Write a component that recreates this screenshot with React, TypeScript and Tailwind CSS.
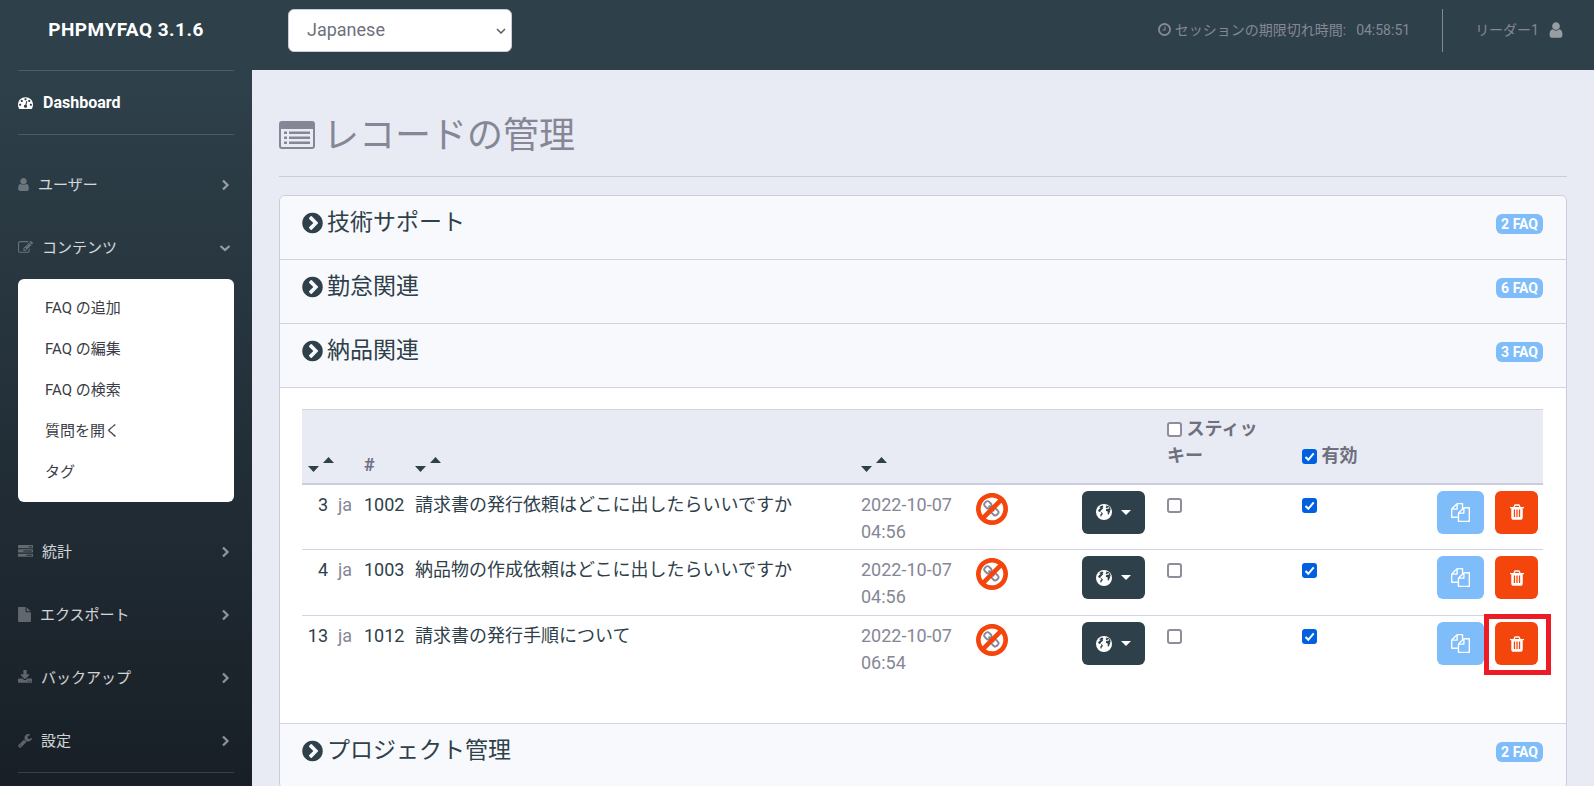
import type { ReactNode } from "react";

const icons = {
  user: {
    box: "256 0 1280 1792",
    d: "M1536 1399q0 109-62.5 187t-150.5 78h-854q-88 0-150.5-78t-62.5-187q0-85 8.5-160.5t31.5-152 58.5-131 94-89 134.5-34.5q131 128 313 128t313-128q76 0 134.5 34.5t94 89 58.5 131 31.5 152 8.5 160.5zm-256-887q0 159-112.5 271.5t-271.5 112.5-271.5-112.5-112.5-271.5 112.5-271.5 271.5-112.5 271.5 112.5 112.5 271.5z",
  },
  dashboard: {
    box: "0 0 1792 1792",
    d: "M384 1152q0-53-37.5-90.5t-90.5-37.5-90.5 37.5-37.5 90.5 37.5 90.5 90.5 37.5 90.5-37.5 37.5-90.5zm192-448q0-53-37.5-90.5t-90.5-37.5-90.5 37.5-37.5 90.5 37.5 90.5 90.5 37.5 90.5-37.5 37.5-90.5zm428 481l101-382q6-26-7.5-48.5t-38.5-29.5-48 6.5-30 39.5l-101 382q-60 5-107 43.5t-63 98.5q-20 77 20 146t117 89 146-20 89-117q16-60-6-117t-72-91zm660-33q0-53-37.5-90.5t-90.5-37.5-90.5 37.5-37.5 90.5 37.5 90.5 90.5 37.5 90.5-37.5 37.5-90.5zm-640-640q0-53-37.5-90.5t-90.5-37.5-90.5 37.5-37.5 90.5 37.5 90.5 90.5 37.5 90.5-37.5 37.5-90.5zm448 192q0-53-37.5-90.5t-90.5-37.5-90.5 37.5-37.5 90.5 37.5 90.5 90.5 37.5 90.5-37.5 37.5-90.5zm320 448q0 261-141 483-19 29-54 29h-1402q-35 0-54-29-141-221-141-483 0-182 71-348t191-286 286-191 348-71 348 71 286 191 191 286 71 348z",
  },
  edit: {
    box: "0 0 1792 1792",
    d: "M888 1184l116-116-152-152-116 116v56h96v96h56zm440-720q-16-16-33 1l-350 350q-17 17-1 33t33-1l350-350q17-17 1-33zm80 594v190q0 119-84.5 203.5t-203.5 84.5h-832q-119 0-203.5-84.5t-84.5-203.5v-832q0-119 84.5-203.5t203.5-84.5h832q63 0 117 25 15 7 18 23 3 17-9 29l-49 49q-14 14-32 8-23-6-45-6h-832q-66 0-113 47t-47 113v832q0 66 47 113t113 47h832q66 0 113-47t47-113v-126q0-13 9-22l64-64q15-15 35-7t20 29zm-96-738l288 288-672 672h-288v-288zm444 132l-92 92-288-288 92-92q28-28 68-28t68 28l152 152q28 28 28 68t-28 68z",
  },
  tasks: {
    box: "0 0 1792 1792",
    d: "M1024 1408h640v-128h-640v128zm-384-512h1024v-128h-1024v128zm640-512h384v-128h-384v128zm512 832v256q0 26-19 45t-45 19h-1664q-26 0-45-19t-19-45v-256q0-26 19-45t45-19h1664q26 0 45 19t19 45zm0-512v256q0 26-19 45t-45 19h-1664q-26 0-45-19t-19-45v-256q0-26 19-45t45-19h1664q26 0 45 19t19 45zm0-512v256q0 26-19 45t-45 19h-1664q-26 0-45-19t-19-45v-256q0-26 19-45t45-19h1664q26 0 45 19t19 45z",
  },
  file: {
    box: "128 0 1536 1792",
    d: "M1152 512v-472q22 14 36 28l408 408q14 14 28 36h-472zm-128 32q0 40 28 68t68 28h544v1056q0 40-28 68t-68 28h-1344q-40 0-68-28t-28-68v-1600q0-40 28-68t68-28h800v544z",
  },
  download: {
    box: "64 0 1664 1792",
    d: "M1344 1344q0-26-19-45t-45-19-45 19-19 45 19 45 45 19 45-19 19-45zm256 0q0-26-19-45t-45-19-45 19-19 45 19 45 45 19 45-19 19-45zm128-224v320q0 40-28 68t-68 28h-1472q-40 0-68-28t-28-68v-320q0-40 28-68t68-28h465l135 136q58 56 136 56t136-56l136-136h464q40 0 68 28t28 68zm-325-569q17 41-14 70l-448 448q-18 19-45 19t-45-19l-448-448q-31-29-14-70 17-39 59-39h256v-448q0-26 19-45t45-19h256q26 0 45 19t19 45v448h256q42 0 59 39z",
  },
  wrench: {
    box: "64 0 1664 1792",
    d: "M448 1472q0-26-19-45t-45-19-45 19-19 45 19 45 45 19 45-19 19-45zm644-420l-682 682q-37 37-90 37-52 0-91-37l-106-108q-38-36-38-90 0-53 38-91l681-681q39 98 114.5 173.5t173.5 114.5zm634-435q0 39-23 106-47 134-164.5 217.5t-258.5 83.5q-185 0-316.5-131.5t-131.5-316.5 131.5-316.5 316.5-131.5q58 0 121.5 16.5t107.5 46.5q16 11 16 28t-16 28l-293 169v224l193 107q5-3 79-48.5t135.5-81 70.5-35.5q15 0 23.5 10t8.5 25z",
  },
  clock: {
    box: "128 0 1536 1792",
    d: "M1024 544v448q0 14-9 23t-23 9h-320q-14 0-23-9t-9-23v-64q0-14 9-23t23-9h224v-352q0-14 9-23t23-9h64q14 0 23 9t9 23zm416 352q0-148-73-273t-198-198-273-73-273 73-198 198-73 273 73 273 198 198 273 73 273-73 198-198 73-273zm224 0q0 209-103 385.5t-279.5 279.5-385.5 103-385.5-103-279.5-279.5-103-385.5 103-385.5 279.5-279.5 385.5-103 385.5 103 279.5 279.5 103 385.5z",
  },
  chevronCircle: {
    box: "128 0 1536 1792",
    d: "M845 1395l454-454q19-19 19-45t-19-45l-454-454q-19-19-45-19t-45 19l-102 102q-19 19-19 45t19 45l307 307-307 307q-19 19-19 45t19 45l102 102q19 19 45 19t45-19zm819-499q0 209-103 385.5t-279.5 279.5-385.5 103-385.5-103-279.5-279.5-103-385.5 103-385.5 279.5-279.5 385.5-103 385.5 103 279.5 279.5 103 385.5z",
  },
  link: {
    box: "0 0 1792 1792",
    d: "M1456 1216q0-40-28-68l-208-208q-28-28-68-28-42 0-72 32 3 3 19 18.5t21.5 21.5 15 19 13 25.5 3.5 27.5q0 40-28 68t-68 28q-15 0-27.5-3.5t-25.5-13-19-15-21.5-21.5-18.5-19q-33 31-33 73 0 40 28 68l206 207q27 27 68 27 40 0 68-26l147-146q28-28 28-67zm-703-705q0-40-28-68l-206-207q-28-28-68-28-39 0-68 27l-147 146q-28 28-28 67 0 40 28 68l208 208q27 27 68 27 42 0 72-31-3-3-19-18.5t-21.5-21.5-15-19-13-25.5-3.5-27.5q0-40 28-68t68-28q15 0 27.5 3.5t25.5 13 19 15 21.5 21.5 18.5 19q33-31 33-73zm895 705q0 120-85 203l-147 146q-83 83-203 83-121 0-204-85l-206-207q-83-83-83-203 0-123 88-209l-88-88q-86 88-208 88-120 0-204-84l-208-208q-84-84-84-204t85-203l147-146q83-83 203-83 121 0 204 85l206 207q83 83 83 203 0 123-88 209l88 88q86-88 208-88 120 0 204 84l208 208q84 84 84 204z",
  },
  ban: {
    box: "128 128 1536 1536",
    d: "M1440 893q0-161-87-295l-754 753q137 89 297 89 111 0 211.5-43.5t173.5-116.5 116-174.5 43-212.5zm-999 299l755-754q-135-91-300-91-148 0-273 73t-198 199-73 274q0 162 89 299zm1223-299q0 157-61 300t-163.5 246-245 164-298.5 61-298.5-61-245-164-163.5-246-61-300 61-299.5 163.5-245.5 245-164 298.5-61 298.5 61 245 164 163.5 245.5 61 299.5z",
  },
  copy: {
    box: "0 0 1792 1792",
    d: "M1696 384q40 0 68 28t28 68v1216q0 40-28 68t-68 28h-960q-40 0-68-28t-28-68v-288h-544q-40 0-68-28t-28-68v-672q0-40 20-88t48-76l408-408q28-28 76-48t88-20h416q40 0 68 28t28 68v328q68-40 128-40h416zm-544 213l-299 299h299v-299zm-640-384l-299 299h299v-299zm196 647l316-316v-416h-384v416q0 40-28 68t-68 28h-416v640h512v-256q0-40 20-88t48-76zm956 804v-1152h-384v416q0 40-28 68t-68 28h-416v640h896z",
  },
  trash: {
    box: "192 0 1408 1792",
    d: "M704 1376v-704q0-14-9-23t-23-9h-64q-14 0-23 9t-9 23v704q0 14 9 23t23 9h64q14 0 23-9t9-23zm256 0v-704q0-14-9-23t-23-9h-64q-14 0-23 9t-9 23v704q0 14 9 23t23 9h64q14 0 23-9t9-23zm256 0v-704q0-14-9-23t-23-9h-64q-14 0-23 9t-9 23v704q0 14 9 23t23 9h64q14 0 23-9t9-23zm-544-992h448l-48-117q-7-9-17-11h-317q-10 2-17 11zm928 32v64q0 14-9 23t-23 9h-96v948q0 83-47 143.5t-113 60.5h-832q-66 0-113-58.5t-47-141.5v-952h-96q-14 0-23-9t-9-23v-64q0-14 9-23t23-9h309l70-167q15-37 54-63t79-26h320q40 0 79 26t54 63l70 167h309q14 0 23 9t9 23z",
  },
};

type IconName = keyof typeof icons;

function Icon({ name, className }: { name: IconName; className: string }) {
  return (
    <svg viewBox={icons[name].box} fill="currentColor" aria-hidden="true" className={`shrink-0 ${className}`}>
      <path d={icons[name].d} />
    </svg>
  );
}

function ListIcon() {
  return (
    <svg viewBox="0 0 36 28" fill="currentColor" aria-hidden="true" className="h-7 w-9 shrink-0">
      <path
        fillRule="evenodd"
        d="M3 0h30a3 3 0 0 1 3 3v22a3 3 0 0 1-3 3H3a3 3 0 0 1-3-3V3a3 3 0 0 1 3-3zM2 8v17q0 1 1 1h30q1 0 1-1V8z"
      />
      <path d="M5 10.500h3v2.500H5zM10 10.500h21v2.500H10zM5 15.500h3V18H5zM10 15.500h21V18H10zM5 20.500h3V23H5zM10 20.500h21V23H10z" />
    </svg>
  );
}

function GlobeIcon() {
  return (
    <svg viewBox="0 0 16 16" aria-hidden="true" className="size-4">
      <circle cx="8" cy="8" r="8" fill="#fff" />
      <path
        fill="#2e404a"
        d="M6.500 1.400 4.700 2 3 3.500l1.300-.1.200.8-1.600 1L2 7l1.200.8 1.400.3.900.9-.4 1-.8.5.1 1.500.8 1 .3-1.400 1-1.100.3-1.200-1.500-1.300-1.300-.4 1-1.200 1.200-1.200 1-.8-.7-.8 1-.7zM10 1.500l.4 1-.6.8.2.900 1-.2 1.400-1 .6.500.1 1-1.500.2-1.200.4-.6 1 .3 1 1.300.2.400 1.100-.2 1.400.5 1 .9-.8.4-1.300.8-1.200-.6-1.200.8.2.200-.8-.5-2-1.100-1.400z"
      />
    </svg>
  );
}

function Angle({ open }: { open?: boolean }) {
  return (
    <svg viewBox="0 0 12 12" fill="none" aria-hidden="true" className="ml-auto size-3 shrink-0 text-white/50">
      <path d={open ? "M1.500 4 6 8l4.500-4" : "M4 1.500 8.500 6 4 10.500"} stroke="currentColor" strokeWidth="2.300" />
    </svg>
  );
}

function SortLinks({ label }: { label: string }) {
  return (
    <div className="flex gap-1 pb-[11px] text-[#2e404a]">
      <a href="#desc" aria-label={`${label} desc`} className="flex h-4 items-end">
        <svg viewBox="0 0 11 6" fill="currentColor" className="h-[6px] w-[11px]">
          <path d="M0 0h11L5.500 6z" />
        </svg>
      </a>
      <a href="#asc" aria-label={`${label} asc`} className="flex h-4 items-start pt-px">
        <svg viewBox="0 0 11 6" fill="currentColor" className="h-[6px] w-[11px]">
          <path d="M0 6h11L5.500 0z" />
        </svg>
      </a>
    </div>
  );
}

function Checkbox({ label, checked, id }: { label?: string; checked?: boolean; id?: string }) {
  return (
    <span className="relative inline-block size-[15px] align-[-2px]">
      <input
        id={id}
        type="checkbox"
        aria-label={label}
        defaultChecked={checked}
        className="peer block size-[15px] appearance-none rounded-[3px] border-2 border-[#8f8d9c] bg-white checked:border-[#0060df] checked:bg-[#0060df]"
      />
      <svg viewBox="0 0 15 15" fill="none" className="pointer-events-none absolute inset-0 hidden size-[15px] peer-checked:block">
        <path d="M3.500 8 6.300 10.800 11.700 4.300" stroke="#fff" strokeWidth="2" />
      </svg>
    </span>
  );
}

const contentLinks = ["FAQ の追加", "FAQ の編集", "FAQ の検索", "質問を開く", "タグ"];

function NavItem({ icon, width, label, open }: { icon: IconName; width: string; label: string; open?: boolean }) {
  return (
    <li>
      <a href="#nav" className="flex h-[63px] items-center pr-[3px] text-[15px] leading-6 text-white/80">
        <Icon name={icon} className={`mr-[9px] h-[15px] text-white/30 ${width}`} />
        {label}
        <Angle open={open} />
      </a>
    </li>
  );
}

function Sidebar() {
  return (
    <nav className="w-[252px] shrink-0 bg-linear-to-b from-[#2e404a] from-10% to-[#181f26] px-[18px]">
      <a href="#home" className="flex h-[70px] items-center justify-center pb-[10px] text-[19px] font-bold tracking-wide text-white uppercase">
        phpMyFAQ 3.1.6
      </a>
      <hr className="border-white/15" />
      <a href="#dashboard" className="flex h-[63px] items-center gap-[10px] text-base font-bold text-white">
        <Icon name="dashboard" className="size-[15px]" />
        Dashboard
      </a>
      <hr className="mb-[18px] border-white/15" />
      <ul>
        <NavItem icon="user" width="w-[11px]" label="ユーザー" />
        <NavItem icon="edit" width="w-[15px]" label="コンテンツ" open />
      </ul>
      <ul className="mb-[18px] rounded-md bg-white py-[9px] text-[15px] text-[#3a3b45]">
        {contentLinks.map((label) => (
          <li key={label}>
            <a href="#content" className="flex h-[41px] items-center px-[27px]">
              {label}
            </a>
          </li>
        ))}
      </ul>
      <ul>
        <NavItem icon="tasks" width="w-[15px]" label="統計" />
        <NavItem icon="file" width="w-[13px]" label="エクスポート" />
        <NavItem icon="download" width="w-[14px]" label="バックアップ" />
        <NavItem icon="wrench" width="w-[14px]" label="設定" />
      </ul>
      <hr className="border-white/15" />
    </nav>
  );
}

function TopBar() {
  return (
    <header className="flex h-[70px] items-start bg-[#2e404a] py-[9px] pr-[31px] pl-9 text-sm text-[#858796]">
      <div className="relative">
        <select
          aria-label="Language"
          defaultValue="ja"
          className="h-[43px] w-56 appearance-none rounded-md border border-[#c9cadb] bg-white pb-[2px] pl-[18px] text-lg text-[#6e707e]"
        >
          <option value="ja">Japanese</option>
          <option value="en">English</option>
        </select>
        <svg viewBox="0 0 10 6" fill="none" className="pointer-events-none absolute top-[19px] right-[6px] h-[6px] w-[10px]">
          <path d="M1 1l4 4 4-4" stroke="#5b5b66" strokeWidth="1.500" />
        </svg>
      </div>
      <div className="ml-auto flex h-[43px] items-center pb-[2px]">
        <Icon name="clock" className="mr-1 h-[15px] w-[13px]" />
        <span className="mr-[10px]">セッションの期限切れ時間:</span>
        <span>04:58:51</span>
      </div>
      <div className="ml-8 h-[43px] w-px bg-[#858796]" />
      <a href="#profile" className="ml-8 flex h-[43px] items-center gap-[10px] pb-[2px]">
        リーダー1
        <Icon name="user" className="h-[18px] w-[14px] text-[#969da3]" />
      </a>
    </header>
  );
}

function Category({ title, count, children }: { title: string; count: number; children?: ReactNode }) {
  return (
    <section className="border-b border-[#d1d3e2]">
      <div className="flex h-[63px] items-start justify-between bg-[#f8f9fc] pt-[9px] pr-[23px] pl-[22px]">
        <h2>
          <button type="button" className="flex items-center gap-1 text-[23px] leading-9 font-normal text-[#2e404a]">
            <Icon name="chevronCircle" className="h-6 w-[21px]" />
            {title}
          </button>
        </h2>
        <span className="mt-[9px] h-5 rounded-md bg-[#7fbcfa] px-[5px] text-sm leading-5 font-bold text-white">{count} FAQ</span>
      </div>
      {children}
    </section>
  );
}

const faqs = [
  { id: 3, solution: 1002, title: "請求書の発行依頼はどこに出したらいいですか", date: "2022-10-07 04:56" },
  { id: 4, solution: 1003, title: "納品物の作成依頼はどこに出したらいいですか", date: "2022-10-07 04:56" },
  { id: 13, solution: 1012, title: "請求書の発行手順について", date: "2022-10-07 06:54", marked: true },
];

function FaqTable() {
  return (
    <div className="border-t border-[#d1d3e2] bg-white pt-[21px] pr-[23px] pb-[41px] pl-[22px]">
      <table className="w-full table-fixed text-lg leading-[27px] text-[#858796]">
        <colgroup>
          <col className="w-[31px]" />
          <col className="w-[26px]" />
          <col className="w-[51px]" />
          <col />
          <col className="w-[115px]" />
          <col className="w-[106px]" />
          <col className="w-[85px]" />
          <col className="w-[135px]" />
          <col className="w-[135px]" />
          <col className="w-[58px]" />
          <col className="w-[53px]" />
        </colgroup>
        <thead>
          <tr className="h-[74px] border-t border-b-2 border-t-[#d1d3e2] border-b-[#cbccdd] bg-[#e8ebf4] text-left text-[#6e707e]">
            <th colSpan={2} className="px-[6px] align-bottom">
              <SortLinks label="ID" />
            </th>
            <th className="px-[5px] pb-[5px] align-bottom">#</th>
            <th className="px-[5px] align-bottom">
              <SortLinks label="Title" />
            </th>
            <th className="px-[5px] align-bottom">
              <SortLinks label="Date" />
            </th>
            <th colSpan={2}></th>
            <th className="pr-8 pb-[14px] pl-[5px] align-bottom">
              <Checkbox id="sticky-all" /> <label htmlFor="sticky-all">スティッキー</label>
            </th>
            <th className="px-[5px] pb-[14px] align-bottom">
              <Checkbox id="active-all" checked /> <label htmlFor="active-all">有効</label>
            </th>
            <th colSpan={2}></th>
          </tr>
        </thead>
        <tbody>
          {faqs.map((faq) => (
            <tr key={faq.id} className="h-[66px] border-b border-[#d1d3e2] align-top last:border-0">
              <td className="pt-[6px] pr-[5px] text-right">
                <a href="#edit" className="text-[#2e404a]">{faq.id}</a>
              </td>
              <td className="px-[5px] pt-[6px]">ja</td>
              <td className="px-[5px] pt-[6px]">
                <a href="#edit" className="text-[#2e404a]">{faq.solution}</a>
              </td>
              <td className="px-[5px] pt-[6px]">
                <a href="#edit" className="text-[#2e404a]">{faq.title}</a>
              </td>
              <td className="px-[5px] pt-[6px]">{faq.date}</td>
              <td className="px-[5px] pt-2">
                <span className="relative flex size-8 items-center justify-center">
                  <Icon name="link" className="size-[18px]" />
                  <Icon name="ban" className="absolute inset-0 size-8 text-[#f4450c]" />
                </span>
              </td>
              <td className="px-[5px] pt-[6px]">
                <button
                  type="button"
                  aria-label="Translate"
                  className="flex h-[43px] w-[63px] items-center justify-center gap-[9px] rounded-md bg-[#2e404a] text-white"
                >
                  <GlobeIcon />
                  <svg viewBox="0 0 10 5" fill="currentColor" className="h-[5px] w-[10px]">
                    <path d="M0 0h10L5 5z" />
                  </svg>
                </button>
              </td>
              <td className="px-[5px] pt-[6px]">
                <Checkbox label="スティッキー" />
              </td>
              <td className="px-[5px] pt-[6px]">
                <Checkbox label="有効" checked />
              </td>
              <td className="px-[5px] pt-[6px]">
                <button type="button" aria-label="Copy" className="flex h-[43px] w-[47px] items-center justify-center rounded-md bg-[#7fbcfa] text-white">
                  <Icon name="copy" className="size-[19px]" />
                </button>
              </td>
              <td className="px-[5px] pt-[6px]">
                <div className="relative w-[43px]">
                  <button type="button" aria-label="Delete" className="flex h-[43px] w-[43px] items-center justify-center rounded-md bg-[#f4450c] text-white">
                    <Icon name="trash" className="h-[18px] w-[14px]" />
                  </button>
                  {faq.marked && <span className="pointer-events-none absolute -top-2 -right-[13px] -bottom-[10px] -left-[11px] border-5 border-[#ed1c24]" />}
                </div>
              </td>
            </tr>
          ))}
        </tbody>
      </table>
    </div>
  );
}

export default function App() {
  return (
    <div className="flex h-screen overflow-hidden bg-[#e8ebf4] font-[Roboto,'Noto_Sans_CJK_JP',sans-serif]">
      <Sidebar />
      <div className="min-w-0 flex-1">
        <TopBar />
        <main className="px-[27px] pt-9">
          <h1 className="flex h-[71px] items-start gap-2 border-b border-[#cbccdd] text-4xl leading-[60px] font-normal text-[#858796]">
            <span className="flex h-[58px] items-center">
              <ListIcon />
            </span>
            レコードの管理
          </h1>
          <div className="mt-[18px] overflow-hidden rounded-md border border-[#cbccdd]">
            <Category title="技術サポート" count={2} />
            <Category title="勤怠関連" count={6} />
            <Category title="納品関連" count={3}>
              <FaqTable />
            </Category>
            <Category title="プロジェクト管理" count={2} />
          </div>
        </main>
      </div>
    </div>
  );
}
